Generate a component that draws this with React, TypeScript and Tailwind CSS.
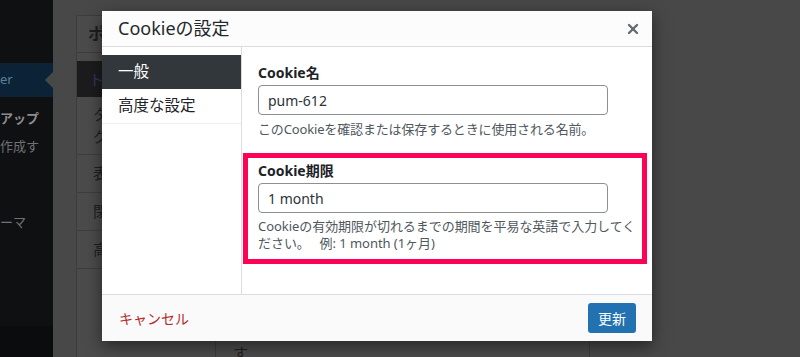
import { X } from "lucide-react";

const font = { fontFamily: '"Noto Sans", "Noto Sans CJK JP", sans-serif' };

function Sidebar() {
  return (
    <div className="w-[53px] h-full bg-[#0f1012] flex flex-col shrink-0 overflow-hidden text-[13px]">
      <div className="h-[63px]" />
      <div className="relative h-[34px] bg-[#0c2236] flex items-center text-[#5d7e99]">
        <span className="pl-0">er</span>
        <span className="absolute right-0 top-[9px] w-0 h-0 border-y-[8px] border-y-transparent border-r-[8px] border-r-[#484848]" />
      </div>
      <div className="pt-[11px] font-bold text-[#8b8c8e] leading-[20px]">アップ</div>
      <div className="pt-[8px] text-[#6f7073] leading-[20px] whitespace-nowrap">作成す</div>
      <div className="pt-[56px] text-[#6f7073] leading-[20px] whitespace-nowrap">ーマ</div>
      <div className="flex-1" />
      <div className="h-[31px] bg-[#0b0c0e]" />
    </div>
  );
}

function BackPanel() {
  return (
    <div className="ml-[23px] mt-[15px] w-[514px] h-[360px] border border-[#3d3d3d] bg-[#4b4b4b] flex flex-col text-[#1e1e1e]">
      <div className="h-[37px] border-b border-[#3d3d3d] pl-[11px] flex items-center text-[17px] font-bold">ポ</div>
      <div className="flex flex-1">
        <div className="w-[139px] border-r border-[#3d3d3d] flex flex-col pt-[8px] text-[15px]">
          <div className="h-[36px] bg-[#1c1c1e] pl-[12px] flex items-center text-[#2b3a63]">ト</div>
          <div className="h-[58px] border-b border-[#3d3d3d] pl-[16px] pt-[6px] leading-[22px]">タ<br />グ</div>
          <div className="h-[38px] border-b border-[#3d3d3d] pl-[16px] flex items-center">表</div>
          <div className="h-[38px] border-b border-[#3d3d3d] pl-[16px] flex items-center">閉</div>
          <div className="h-[38px] border-b border-[#3d3d3d] pl-[16px] flex items-center">高</div>
        </div>
        <div className="flex-1 pl-[17px] pt-[270px] text-[15px] leading-[20px]">
          <div>ポップアップを表示する場所を制限できます。</div>
          <div>す</div>
        </div>
      </div>
    </div>
  );
}

function Field({ label, value }: { label: string; value: string }) {
  return (
    <>
      <div className="text-[14px] font-bold leading-[20px] text-[#1d2327]">{label}</div>
      <div className="mt-[2px] w-[350px] h-[30px] border border-[#8c8f94] rounded-[4px] bg-white flex items-center pl-[9px] text-[14px] text-[#2c3338]">
        {value}
      </div>
    </>
  );
}

function Modal() {
  return (
    <div className="absolute left-[102px] top-[11px] w-[550px] h-[330px] bg-white shadow-[0_5px_15px_rgba(0,0,0,0.5)] flex flex-col">
      <div className="h-[36px] border-b border-[#dcdcde] bg-[#fcfcfc] flex items-center justify-between pl-[16px] pr-[11px]">
        <span className="text-[18px] text-[#23282d]">Cookieの設定</span>
        <X size={16} strokeWidth={3.5} className="text-[#646970]" />
      </div>
      <div className="h-[247px] flex">
        <div className="w-[140px] border-r border-[#dcdcde] pt-[8px] flex flex-col text-[15.5px]">
          <div className="h-[34px] bg-[#32373c] text-white pl-[16px] flex items-center">一般</div>
          <div className="h-[35px] border-b border-[#eeeeee] text-[#1d2327] pl-[16px] flex items-center">高度な設定</div>
        </div>
        <div className="flex-1 flex flex-col">
          <div className="pl-[16px] pt-[16px]">
            <Field label="Cookie名" value="pum-612" />
            <div className="mt-[5px] text-[13px] leading-[18px] text-[#50575e] tracking-[-0.15px]">
              このCookieを確認または保存するときに使用される名前。
            </div>
          </div>
          <div className="mt-[15px] ml-[1px] w-[404px] border-[5px] border-[#fc0356] pl-[10px] pt-[3px] pb-[7px]">
            <Field label="Cookie期限" value="1 month" />
            <div className="mt-[5px] text-[13px] leading-[17px] text-[#50575e] whitespace-nowrap tracking-[-0.05px]">
              <div>Cookieの有効期限が切れるまでの期間を平易な英語で入力してく</div>
              <div>ださい。　 例: 1 month (1ヶ月)</div>
            </div>
          </div>
        </div>
      </div>
      <div className="h-[47px] border-t border-[#dcdcde] bg-[#fafafa] flex items-center justify-between pl-[17px] pr-[16px]">
        <span className="text-[14px] text-[#b32d2e]">キャンセル</span>
        <span className="w-[48px] h-[30px] rounded-[3px] bg-[#2271b1] text-white text-[14px] flex items-center justify-center">
          更新
        </span>
      </div>
    </div>
  );
}

export default function App() {
  return (
    <div className="relative w-[800px] h-[357px] overflow-hidden bg-[#484848] flex" style={font}>
      <Sidebar />
      <BackPanel />
      <Modal />
    </div>
  );
}
